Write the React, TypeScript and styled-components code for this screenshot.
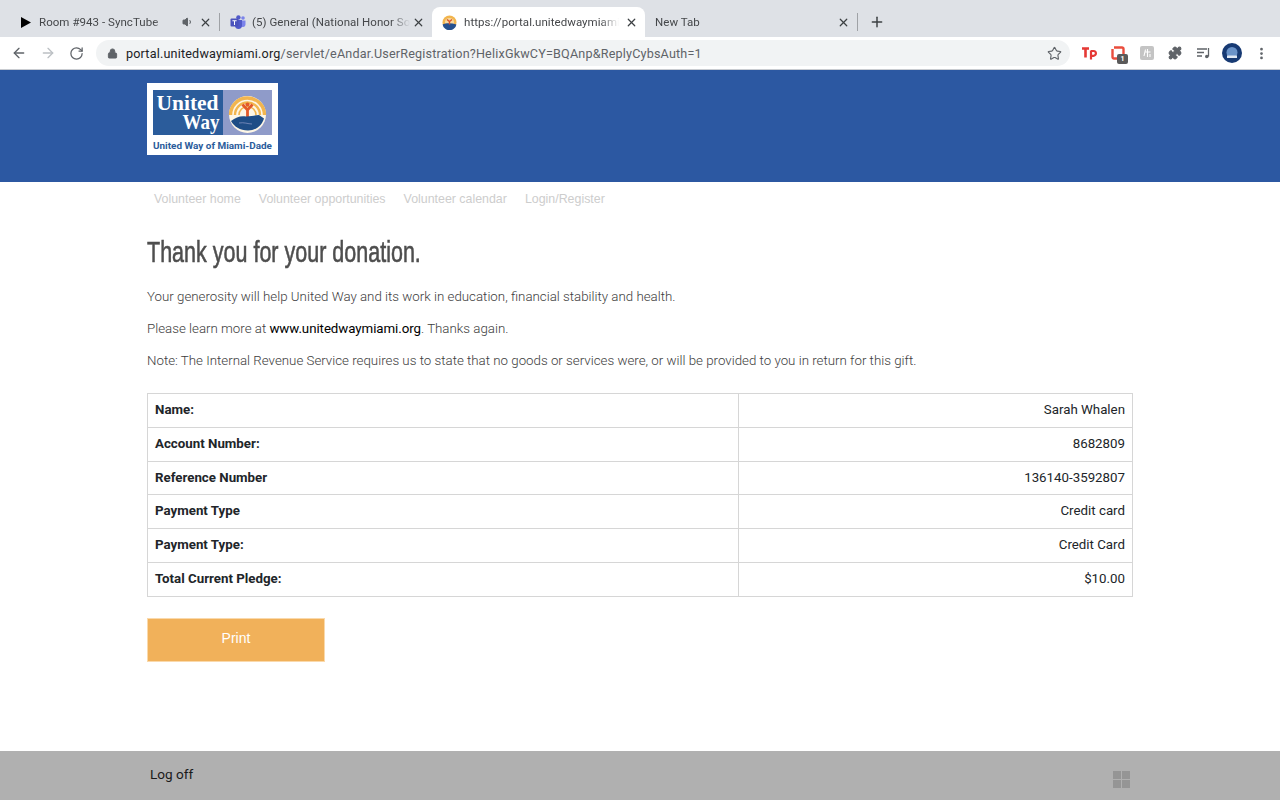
import React from "react";
import styled, { createGlobalStyle } from "styled-components";
import { ArrowLeft, ArrowRight, RotateCw, Lock, Star, X, Plus, Puzzle, EllipsisVertical, Volume1 } from "lucide-react";

const Global = createGlobalStyle`
  html, body { margin: 0; padding: 0; background: #fff; }
  body { font-family: "Roboto", "Liberation Sans", sans-serif; height: 800px; overflow: hidden; }
  * { box-sizing: border-box; }
`;

const Page = styled.div`
  width: 1280px;
  height: 800px;
  display: flex;
  flex-direction: column;
  overflow: hidden;
`;

const TabStrip = styled.div`
  height: 37px;
  flex: none;
  background: #dee1e6;
  display: flex;
  align-items: flex-end;
`;

const Tab = styled.div<{ $w: number; $active?: boolean }>`
  position: relative;
  width: ${(p) => p.$w}px;
  height: 30px;
  flex: none;
  display: flex;
  align-items: center;
  padding: 0 7px 0 10px;
  background: ${(p) => (p.$active ? "#fff" : "transparent")};
  border-radius: ${(p) => (p.$active ? "8px 8px 0 0" : "0")};
  color: #45474a;
`;

const TabSep = styled.span`
  width: 1px;
  height: 18px;
  flex: none;
  background: #9fa2a6;
  margin-bottom: 6px;
`;

const TabTitle = styled.span<{ $w: number; $ml: number }>`
  font: 400 11.5px "Roboto", sans-serif;
  letter-spacing: 0.05px;
  width: ${(p) => p.$w}px;
  margin-left: ${(p) => p.$ml}px;
  white-space: nowrap;
  overflow: hidden;
  flex: none;
  -webkit-mask-image: linear-gradient(to right, #000 88%, transparent);
`;

const TabClose = styled(X)`
  width: 13px;
  height: 13px;
  color: #3c4043;
  stroke-width: 2.2;
  flex: none;
  margin-left: auto;
`;

const NewTab = styled(Plus)`
  width: 16px;
  height: 16px;
  color: #3c4043;
  stroke-width: 2.2;
  margin: 0 0 7px 11px;
`;

const Toolbar = styled.div`
  height: 33px;
  flex: none;
  background: #fff;
  display: flex;
  align-items: center;
  padding: 0 0 0 11px;
  border-bottom: 1px solid #c9ccd1;
`;

const NavIcons = styled.div`
  display: flex;
  align-items: center;
  gap: 13px;
  width: 85px;
  flex: none;
`;

const Omnibox = styled.div`
  width: 974px;
  height: 26px;
  flex: none;
  border-radius: 13px;
  background: #f1f3f4;
  display: flex;
  align-items: center;
  padding: 0 8px 0 11px;
`;

const Url = styled.div`
  font: 400 12.6px "Roboto", sans-serif;
  letter-spacing: 0.18px;
  color: #5f6368;
  margin-left: 8px;
  white-space: nowrap;
  flex: 1;
  b { font-weight: 400; color: #202124; }
`;

const Extensions = styled.div`
  display: flex;
  align-items: center;
  margin-left: 11px;
  gap: 13px;
`;

const ExtSlot = styled.div<{ $ml?: number }>`
  position: relative;
  width: 16px;
  height: 16px;
  margin-left: ${(p) => p.$ml ?? 0}px;
  display: flex;
  align-items: center;
  justify-content: center;
`;

const Badge = styled.span`
  position: absolute;
  left: 7px;
  top: 9px;
  width: 11px;
  height: 10px;
  border-radius: 2px;
  background: #5a5a5a;
  color: #fff;
  font: 700 7px/10px "Roboto", sans-serif;
  text-align: center;
`;

const SiteHeader = styled.header`
  height: 112px;
  flex: none;
  background: #2c58a2;
  padding: 13px 0 0 147px;
`;

const NavBar = styled.nav`
  height: 33px;
  flex: none;
  display: flex;
  align-items: center;
  gap: 18px;
  padding-left: 154px;
  font: 400 12.4px "Liberation Sans", Arial, sans-serif;
  color: #cdcdcd;
`;

const Main = styled.main`
  flex: 1;
  padding: 21px 147px 0;
`;

const Heading = styled.h1`
  margin: 0 0 19px;
  height: 33px;
  font: 400 30px/32px "Liberation Sans Narrow", "Liberation Sans", sans-serif;
  color: #4e4e4e;
  -webkit-text-stroke: 0.6px #4e4e4e;
  transform-origin: left center;
  transform: scaleX(0.717);
  white-space: nowrap;
`;

const Para = styled.p`
  margin: 0 0 14px;
  height: 18px;
  font: 300 13.31px/18px "Roboto", sans-serif;
  color: #3d3d3d;
  white-space: nowrap;
  a { color: #000; font-weight: 400; text-decoration: none; letter-spacing: -0.06px; }
`;

const Table = styled.div`
  width: 986px;
  margin-top: 23px;
  border: 1px solid #d6d6d6;
  border-bottom: 0;
`;

const Row = styled.div`
  display: grid;
  grid-template-columns: 591px 1fr;
  height: 33.8px;
  border-bottom: 1px solid #d6d6d6;
  font: 400 13.3px/32px "Roboto", sans-serif;
  color: #212529;
`;

const Label = styled.div`
  font-weight: 700;
  padding-left: 7px;
  border-right: 1px solid #d6d6d6;
`;

const Value = styled.div`
  text-align: right;
  padding-right: 7px;
`;

const PrintButton = styled.button`
  display: block;
  width: 178px;
  height: 44px;
  margin-top: 21px;
  border: 1px solid #fad9ab;
  padding: 0 0 3px;
  background: #f1b15a;
  color: #fff;
  font: 400 14px "Liberation Sans", Arial, sans-serif;
`;

const Footer = styled.footer`
  height: 49px;
  flex: none;
  background: #b0b0b0;
  display: flex;
  padding: 14px 0 0 150px;
  font: 400 13.6px/18px "Roboto", sans-serif;
  color: #1a1a1a;
  justify-content: space-between;
`;

const Grid = styled.div`
  display: grid;
  grid-template-columns: 8px 8px;
  grid-auto-rows: 8px;
  gap: 1px;
  margin: 6px 150px 0 0;
  height: 17px;
  span { background: #959595; }
`;

const Teams = () => (
  <svg width="16" height="14" viewBox="0 0 16 14" style={{ flex: "none" }}>
    <circle cx="13" cy="3" r="1.8" fill="#7b83eb" />
    <path d="M10 5.5h5.5v4a2.6 2.6 0 0 1-5 1z" fill="#7b83eb" />
    <circle cx="8.4" cy="2.4" r="2.2" fill="#5059c9" />
    <path d="M5 5h7v5.5a3.4 3.4 0 0 1-7 0z" fill="#5059c9" />
    <rect x="0.5" y="3.5" width="8" height="8" rx="1" fill="#4b53bc" />
    <path d="M2.4 5.3h4.2v1H5v3.6H4V6.3H2.4z" fill="#fff" />
  </svg>
);

const Favicon = () => (
  <svg width="15" height="15" viewBox="0 0 15 15" style={{ flex: "none" }}>
    <circle cx="7.5" cy="7.5" r="7" fill="#f2b54e" />
    <circle cx="7.5" cy="7.5" r="4.6" fill="#f7d9a0" />
    <path d="M0.6 9.4c3-1.6 9-1.6 13.8 0a7 7 0 0 1-13.8 0z" fill="#24508f" />
    <path d="M5 4.5l2.5 2 2.5-2M7.5 6.5v3" stroke="#d9542b" strokeWidth="1.4" fill="none" />
  </svg>
);

const Logo = () => (
  <svg width="131" height="72" viewBox="0 0 131 72" style={{ display: "block" }}>
    <rect width="131" height="72" fill="#fff" />
    <rect x="6" y="7" width="70" height="45" fill="#2b5c9b" />
    <rect x="76" y="7" width="49" height="45" fill="#8f9bc9" />
    <text x="9.5" y="26.5" fontFamily="Liberation Serif, serif" fontWeight="700" fontSize="21" fill="#fff" textLength="62" lengthAdjust="spacingAndGlyphs">United</text>
    <text x="35.5" y="46" fontFamily="Liberation Serif, serif" fontWeight="700" fontSize="21" fill="#fff" textLength="37" lengthAdjust="spacingAndGlyphs">Way</text>
    <g fill="none">
      <circle cx="100.5" cy="31.5" r="18.5" fill="#fdf6e6" />
      <path d="M83.5 36a17 17 0 1 1 34 0" stroke="#f2b54e" strokeWidth="3.4" transform="translate(0 -4)" />
      <path d="M88 36a12.500 12.500 0 1 1 25 0" stroke="#f2b54e" strokeWidth="2.4" transform="translate(0 -4)" />
      <path d="M92 36a8.500 8.500 0 1 1 17 0" stroke="#f2b54e" strokeWidth="1.6" transform="translate(0 -4)" />
    </g>
    <circle cx="100.5" cy="21.5" r="2.1" fill="#e2592a" />
    <path d="M95.5 21.5l5 5.5 5-5.500M100.5 26.500v8" stroke="#e2592a" strokeWidth="2.8" fill="none" />
    <path d="M84 38c5-4 10-5.500 15-4.500 6 0 9-1.500 13-1.500l5 3.500c-2 7-8 12-16 12-8 0-14-4-17-9.500z" fill="#1e4d86" />
    <path d="M92 40c5-1 9 1 13 1" stroke="#8f9bc9" strokeWidth="0.7" fill="none" />
    <text x="6" y="66" fontFamily="Roboto, sans-serif" fontWeight="700" fontSize="9.3" fill="#2b5c9b" textLength="119" lengthAdjust="spacingAndGlyphs">United Way of Miami-Dade</text>
  </svg>
);

const rows = [
  ["Name:", "Sarah Whalen"],
  ["Account Number:", "8682809"],
  ["Reference Number", "136140-3592807"],
  ["Payment Type", "Credit card"],
  ["Payment Type:", "Credit Card"],
  ["Total Current Pledge:", "$10.00"],
];

export default function App() {
  return (
    <Page>
      <Global />
      <TabStrip>
        <Tab $w={219}>
          <svg width="12" height="13" viewBox="0 0 12 13" style={{ marginLeft: 10, flex: "none" }}>
            <path d="M1 1l10 5.500L1 12z" fill="#000" />
          </svg>
          <TabTitle $w={130} $ml={7}>Room #943 - SyncTube</TabTitle>
          <Volume1 size={12} color="#5f6368" fill="#5f6368" style={{ marginLeft: 13, flex: "none" }} />
          <TabClose />
        </Tab>
        <TabSep />
        <Tab $w={212}>
          <Teams />
          <TabTitle $w={158} $ml={6}>(5) General (National Honor So</TabTitle>
          <TabClose />
        </Tab>
        <Tab $w={213} $active>
          <Favicon />
          <TabTitle $w={155} $ml={7}>https://portal.unitedwaymiami.org</TabTitle>
          <TabClose />
        </Tab>
        <Tab $w={212}>
          <TabTitle $w={120} $ml={0}>New Tab</TabTitle>
          <TabClose />
        </Tab>
        <TabSep />
        <NewTab />
      </TabStrip>
      <Toolbar>
        <NavIcons>
          <ArrowLeft size={16} color="#5f6368" strokeWidth={2} />
          <ArrowRight size={16} color="#bcc0c4" strokeWidth={2} />
          <RotateCw size={15} color="#5f6368" strokeWidth={2} />
        </NavIcons>
        <Omnibox>
          <Lock size={11} color="#5f6368" fill="#5f6368" />
          <Url><b>portal.unitedwaymiami.org</b>/servlet/eAndar.UserRegistration?HelixGkwCY=BQAnp&amp;ReplyCybsAuth=1</Url>
          <Star size={15} color="#5f6368" strokeWidth={1.8} />
        </Omnibox>
        <Extensions>
          <ExtSlot>
            <svg width="16" height="14" viewBox="0 0 16 14">
              <path d="M1 2.500h7M4.500 2.500v9" stroke="#e53935" strokeWidth="2.6" fill="none" />
              <path d="M10 4.500v9M10 5h2.500a2.200 2.200 0 0 1 0 4.800H10" stroke="#e53935" strokeWidth="2.2" fill="none" />
            </svg>
          </ExtSlot>
          <ExtSlot>
            <svg width="14" height="14" viewBox="0 0 14 14">
              <path d="M3 1.500h8a1.500 1.500 0 0 1 1.500 1.500v8M8 12.500H3A1.500 1.500 0 0 1 1.500 11V3" stroke="#ea4d3d" strokeWidth="2.4" fill="none" />
            </svg>
            <Badge>1</Badge>
          </ExtSlot>
          <ExtSlot>
            <svg width="14" height="14" viewBox="0 0 14 14">
              <rect width="14" height="14" rx="2" fill="#c4c4c4" />
              <path d="M7.500 3v8M4.500 6h6M5.500 3.500L4 10M10 8v3" stroke="#fff" strokeWidth="1.1" fill="none" />
            </svg>
          </ExtSlot>
          <ExtSlot $ml={-1}>
            <Puzzle size={14} color="#5f6368" fill="#5f6368" />
          </ExtSlot>
          <ExtSlot>
            <svg width="16" height="14" viewBox="0 0 16 14">
              <path d="M1 3h10M1 6.500h7M1 10h5" stroke="#5f6368" strokeWidth="1.3" />
              <path d="M12.500 2v8.500" stroke="#5f6368" strokeWidth="1.3" />
              <circle cx="10.8" cy="10.5" r="1.8" fill="#5f6368" />
            </svg>
          </ExtSlot>
          <svg width="20" height="20" viewBox="0 0 20 20" style={{ marginLeft: -3 }}>
            <circle cx="10" cy="10" r="10" fill="#173a73" />
            <circle cx="10" cy="9.500" r="5.500" fill="#6a93c8" />
            <rect x="5" y="12.500" width="10" height="2.500" fill="#dfe8f3" />
          </svg>
          <EllipsisVertical size={15} color="#5f6368" strokeWidth={2.4} style={{ marginLeft: -1 }} />
        </Extensions>
      </Toolbar>
      <SiteHeader>
        <Logo />
      </SiteHeader>
      <NavBar>
        <span>Volunteer home</span>
        <span>Volunteer opportunities</span>
        <span>Volunteer calendar</span>
        <span>Login/Register</span>
      </NavBar>
      <Main>
        <Heading>Thank you for your donation.</Heading>
        <Para>Your generosity will help United Way and its work in education, financial stability and health.</Para>
        <Para>Please learn more at <a>www.unitedwaymiami.org</a>. Thanks again.</Para>
        <Para>Note: The Internal Revenue Service requires us to state that no goods or services were, or will be provided to you in return for this gift.</Para>
        <Table>
          {rows.map(([k, v], i) => (
            <Row key={i}>
              <Label>{k}</Label>
              <Value>{v}</Value>
            </Row>
          ))}
        </Table>
        <PrintButton>Print</PrintButton>
      </Main>
      <Footer>
        <span>Log off</span>
        <Grid><span /><span /><span /><span /></Grid>
      </Footer>
    </Page>
  );
}
